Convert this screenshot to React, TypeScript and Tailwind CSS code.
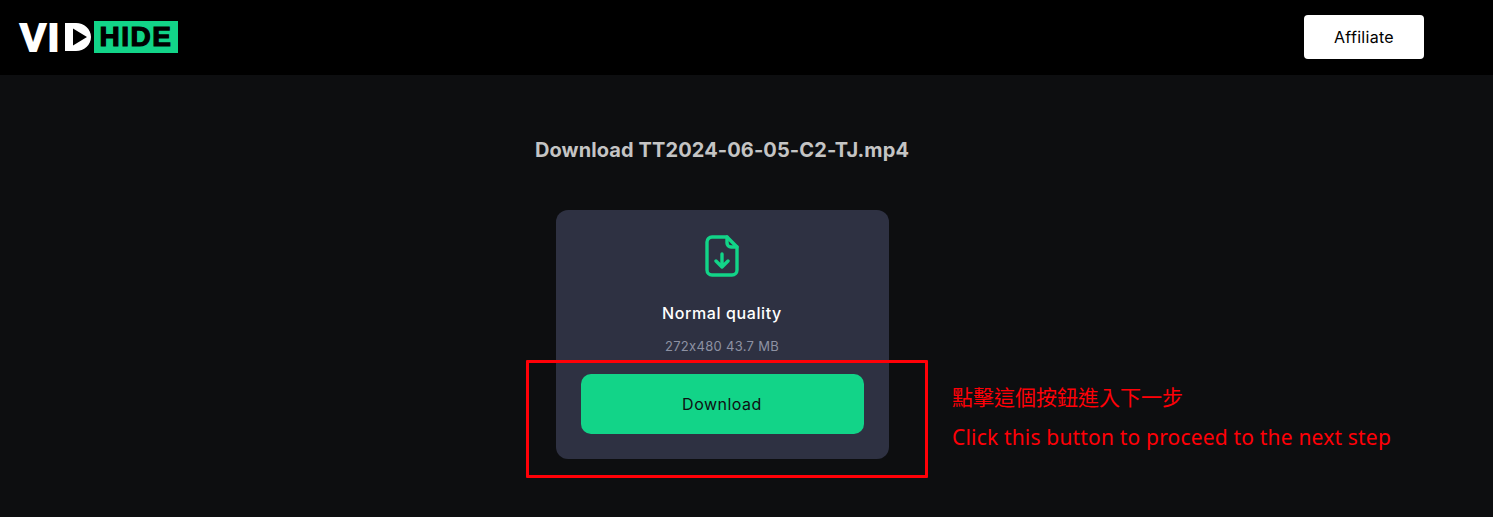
const sans = "font-['Inter','Noto_Sans',sans-serif]";

function Logo() {
  return (
    <div className="flex items-center h-[32px] mt-[-1px]" aria-label="VIDHIDE">
      <span className="font-['Liberation_Sans',sans-serif] font-bold text-[39px] leading-none text-white tracking-[2px] [-webkit-text-stroke:2px_white]">
        VI
      </span>
      <svg width="26" height="28" viewBox="0 0 26 28" className="ml-[4px]">
        <path fillRule="evenodd" fill="#fff" d="M0 0h11c8 0 15 6 15 14s-7 14-15 14H0z M8 5.5v17L22 14z" />
      </svg>
      <div className="ml-[3px] w-[84px] h-[32px] bg-[#12d488] flex items-center justify-center">
        <span className="font-['Liberation_Sans',sans-serif] font-bold text-[28px] leading-none text-black tracking-[1.5px] [-webkit-text-stroke:1.2px_black]">
          HIDE
        </span>
      </div>
    </div>
  );
}

function FileDownIcon() {
  return (
    <svg width="34" height="42" viewBox="0 0 34 42" fill="none" stroke="#12d488" strokeWidth="3.4" strokeLinecap="round" strokeLinejoin="round">
      <path d="M7 2h15l10 10v23a5 5 0 0 1-5 5H7a5 5 0 0 1-5-5V7a5 5 0 0 1 5-5z" />
      <path d="M22 2v6a4 4 0 0 0 4 4h6" />
      <path d="M17 19v13M11 26l6 6 6-6" />
    </svg>
  );
}

export default function App() {
  return (
    <div className={`relative w-[1493px] h-[517px] overflow-hidden bg-[#0d0e10] ${sans}`}>
      <header className="h-[75px] bg-black flex items-center justify-between pl-[20px] pr-[69px]">
        <Logo />
        <button className="w-[120px] h-[44px] bg-white rounded-[4px] text-black text-[16px] tracking-[0.3px] -mt-[1px]">
          Affiliate
        </button>
      </header>

      <main className="w-[1444px] flex flex-col items-center">
        <h1 className="mt-[63px] h-[24px] leading-[24px] text-[20px] font-bold text-[#c4c4c4] tracking-[0.1px] whitespace-nowrap">
          Download TT2024-06-05-C2-TJ.mp4
        </h1>

        <section className="mt-[48px] w-[333px] h-[249px] bg-[#2e3142] rounded-[12px] flex flex-col items-center pt-[25px] px-[25px]">
          <FileDownIcon />
          <div className="mt-[26px] text-[16px] leading-[20px] font-medium tracking-[0.6px] text-white">Normal quality</div>
          <div className="mt-[13px] text-[13px] leading-[20px] tracking-[0.3px] text-[#8d91a3] [font-feature-settings:'calt'_0]">272x480 43.7 MB</div>
          <button className="mt-[18px] w-full h-[60px] shrink-0 bg-[#12d488] rounded-[10px] text-[16px] tracking-[0.5px] text-[#0e0f11]">
            Download
          </button>
        </section>
      </main>

      {/* annotation drawn over the page */}
      <div className="absolute left-[526px] top-[360px] w-[402px] h-[118px] border-[3px] border-[#ff0007] rounded-[1px]" />
      <div className="absolute left-[952px] top-[383px] text-[#ff0007] text-[21px] leading-[28px] font-['Noto_Sans','Noto_Sans_CJK_TC',sans-serif]">
        點擊這個按鈕進入下一步
      </div>
      <div className="absolute left-[952px] top-[423px] text-[#ff0007] text-[21px] tracking-[0.18px] leading-[28px] whitespace-nowrap font-['Noto_Sans','Noto_Sans_CJK_TC',sans-serif]">
        Click this button to proceed to the next step
      </div>
    </div>
  );
}
